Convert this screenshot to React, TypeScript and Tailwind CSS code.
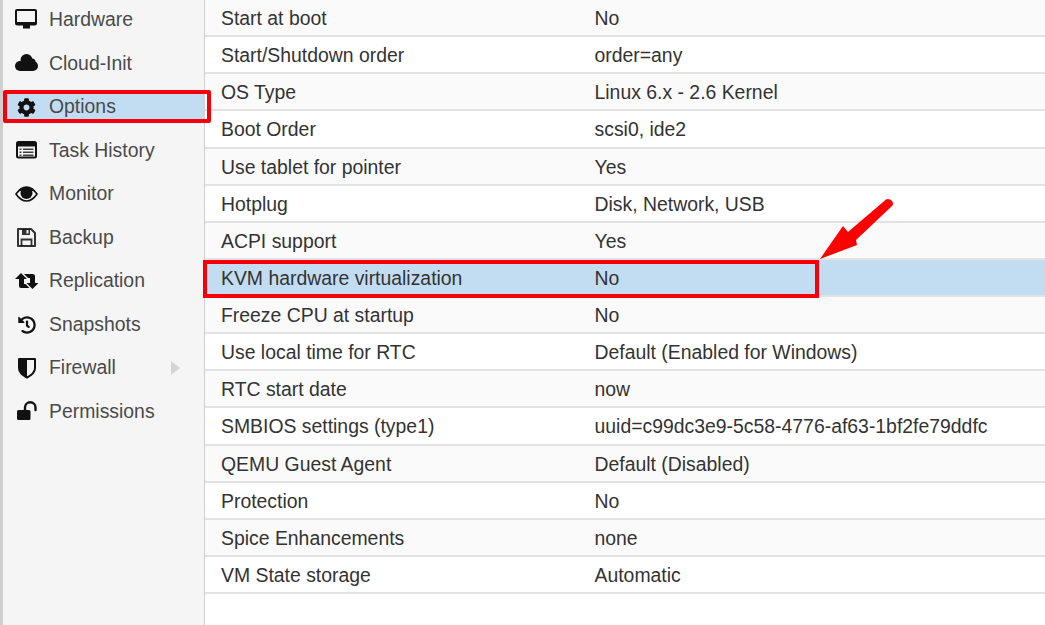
import { FaCog, FaHistory } from "react-icons/fa";
import type { ReactNode } from "react";

const Svg = ({ children }: { children: ReactNode }) => (
  <svg width="24" height="24" viewBox="0 0 24 24" fill="currentColor">{children}</svg>
);

const Desktop = () => (
  <Svg>
    <path d="M3 1h18a2 2 0 0 1 2 2v12a2.5 2.5 0 0 1-2.5 2.5H16v3H9v-3H3.5A2.5 2.5 0 0 1 1 15V3a2 2 0 0 1 2-2zm0 2v11h18V3z" fillRule="evenodd" />
  </Svg>
);
const Cloud = () => (
  <Svg>
    <circle cx="12.5" cy="8" r="6" />
    <circle cx="6" cy="14" r="5" />
    <circle cx="19" cy="14" r="5" />
    <circle cx="18" cy="10" r="3.5" />
    <rect x="6" y="11" width="13" height="8" />
  </Svg>
);
const ListAlt = () => (
  <Svg>
    <rect x="3" y="3" width="19" height="15.5" rx="1.5" fill="none" stroke="currentColor" strokeWidth="2" />
    <rect x="3" y="3" width="19" height="4.5" />
    <path d="M5.5 9.5h2v1.5h-2zM9 9.5h10.5v1.5H9zM5.5 12.5h2V14h-2zM9 12.5h10.5V14H9zM5.5 15.5h2V17h-2zM9 15.5h10.5V17H9z" opacity="0.8" />
  </Svg>
);
const Eye = () => (
  <Svg>
    <path d="M2 12 C6 6 10 5 12.5 5 C15 5 19 6 23 12 C19 18 15 19 12.5 19 C10 19 6 18 2 12z" fill="none" stroke="currentColor" strokeWidth="1.6" />
    <circle cx="12.5" cy="11" r="6" />
    <path d="M3 11 C6 7 9 5.5 12.5 5.5 C16 5.5 19 7 22 11 L19 9 L6 9z" />
  </Svg>
);
const Save = () => (
  <Svg>
    <path d="M4 3h13l4 4v13H4z" fill="none" stroke="currentColor" strokeWidth="2" strokeLinejoin="round" opacity="0.85" />
    <path d="M8 3h8v6H8z" opacity="0.85" />
    <rect x="12.5" y="4" width="2" height="3.5" fill="#f5f5f5" />
    <path d="M7.5 20v-6.5h10V20" fill="none" stroke="currentColor" strokeWidth="1.8" opacity="0.85" />
  </Svg>
);
const Retweet = () => (
  <Svg>
    <path d="M7 4 L13 10 H10 V15 H11.5 L15.5 19 H7 Q5 19 5 17 V10 H1 Z" />
    <path d="M18.5 20 L12.5 14 H16 V9 H14 L10 5 H18.5 Q21 5 21 7 V14 H24.5 Z" />
  </Svg>
);
const Shield = () => (
  <Svg>
    <path d="M5 3h16v9c0 5-4 7.5-8 9.5C9 19.5 5 17 5 12z" fill="none" stroke="currentColor" strokeWidth="2" strokeLinejoin="round" />
    <path d="M5 3h8v18.5C9 19.5 5 17 5 12z" />
  </Svg>
);
const Unlock = () => (
  <Svg>
    <rect x="3" y="10" width="13.5" height="10" rx="1.5" />
    <path d="M11 10V7.5a5 5 0 0 1 10.5 0v2.5" fill="none" stroke="currentColor" strokeWidth="2.4" strokeLinecap="round" />
  </Svg>
);
const Cog = () => (
  <span className="flex h-6 w-6 items-center justify-center pl-[1px]"><FaCog size={19} /></span>
);
const Hist = () => (
  <span className="flex h-6 w-6 items-center justify-center pl-[1px]"><FaHistory size={18} /></span>
);

const nav = [
  { label: "Hardware", Icon: Desktop },
  { label: "Cloud-Init", Icon: Cloud },
  { label: "Options", Icon: Cog, active: true },
  { label: "Task History", Icon: ListAlt },
  { label: "Monitor", Icon: Eye },
  { label: "Backup", Icon: Save },
  { label: "Replication", Icon: Retweet },
  { label: "Snapshots", Icon: Hist },
  { label: "Firewall", Icon: Shield, arrow: true },
  { label: "Permissions", Icon: Unlock },
];

const rows = [
  ["Start at boot", "No"],
  ["Start/Shutdown order", "order=any"],
  ["OS Type", "Linux 6.x - 2.6 Kernel"],
  ["Boot Order", "scsi0, ide2"],
  ["Use tablet for pointer", "Yes"],
  ["Hotplug", "Disk, Network, USB"],
  ["ACPI support", "Yes"],
  ["KVM hardware virtualization", "No"],
  ["Freeze CPU at startup", "No"],
  ["Use local time for RTC", "Default (Enabled for Windows)"],
  ["RTC start date", "now"],
  ["SMBIOS settings (type1)", "uuid=c99dc3e9-5c58-4776-af63-1bf2fe79ddfc"],
  ["QEMU Guest Agent", "Default (Disabled)"],
  ["Protection", "No"],
  ["Spice Enhancements", "none"],
  ["VM State storage", "Automatic"],
];

export default function App() {
  return (
    <div className="relative flex h-[625px] w-[1045px] overflow-hidden bg-white font-['Liberation_Sans',Arial,sans-serif] text-[19.4px] text-[#333]">
      <aside className="flex h-full w-[205px] shrink-0 flex-col gap-[13.5px] border-r border-r-[#cfcfcf] border-l-[3px] border-l-[#cfcfcf] bg-[#f5f5f5] pt-[5px] pl-px">
        {nav.map(({ label, Icon, active, arrow }) => (
          <div key={label} className={`flex h-[30px] shrink-0 items-center text-[#4a4a4a] ${active ? "bg-[#c2ddf2]" : ""}`}>
            <span className="flex w-[45px] shrink-0 justify-start pl-[10px] text-[#111]">
              <Icon />
            </span>
            <span>{label}</span>
            {arrow && <span className="ml-auto mr-[24px] h-0 w-0 border-y-[7px] border-l-[9px] border-y-transparent border-l-[#d4d4d4]" />}
          </div>
        ))}
      </aside>
      <main className="flex min-w-0 flex-1 flex-col">
        {rows.map(([k, v], i) => (
          <div
            key={k}
            className={`flex h-[37.13px] shrink-0 items-center border-b-2 border-b-[#e2e2e2] pt-[2px] pl-[16px] ${i === 7 ? "bg-[#c2ddf2]" : i % 2 === 0 ? "bg-[#fafafa]" : "bg-white"}`}
          >
            <span className="w-[373.5px] shrink-0">{k}</span>
            <span>{v}</span>
          </div>
        ))}
      </main>
      <div className="absolute left-[3px] top-[90px] h-[33px] w-[208px] rounded-[2px] border-[4px] border-[#f5000a]" />
      <div className="absolute left-[203px] top-[260px] h-[38px] w-[616px] border-[4px] border-[#f5000a]" />
      <svg className="absolute left-[815px] top-[195px]" width="80" height="70" viewBox="0 0 80 70">
        <path d="M5 64 L28 31 L33 37 L71 4.5 Q74 3 77 6 Q79 9 77 11 L41 45 L42 50 Z" fill="#ff0000" />
      </svg>
    </div>
  );
}
